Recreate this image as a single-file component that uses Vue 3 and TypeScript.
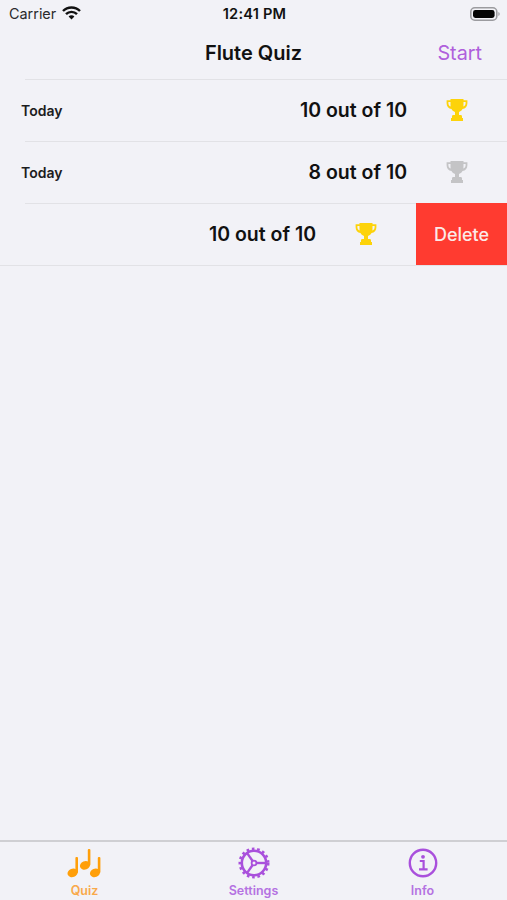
<script setup lang="ts">
interface QuizResult {
  id: number;
  date: string;
  score: number;
  total: number;
  swiped?: boolean;
}

const results: QuizResult[] = [
  { id: 1, date: 'Today', score: 10, total: 10 },
  { id: 2, date: 'Today', score: 8, total: 10 },
  { id: 3, date: '', score: 10, total: 10, swiped: true },
];

const gearSpokes = [0, 125, 235];
</script>

<template>
  <div class="screen">
    <div class="status-bar">
      <div class="status-left">
        <span class="carrier">Carrier</span>
        <svg class="wifi" width="19" height="14" viewBox="0 0 19 14" fill="none" stroke="#111" stroke-width="2.4">
          <path d="M1 5a12 12 0 0 1 17 0" />
          <path d="M4 8.2a7.6 7.6 0 0 1 11 0" />
          <path d="M9.5 13.5l-2.9-3a4 4 0 0 1 5.8 0z" fill="#111" stroke="none" />
        </svg>
      </div>
      <span class="clock">12:41 PM</span>
      <div class="status-right">
        <svg width="30" height="14" viewBox="0 0 30 14">
          <rect x="0.8" y="0.8" width="26" height="12.4" rx="4" fill="none" stroke="#9b9b9f" stroke-width="1.6" />
          <rect x="3" y="3" width="21.6" height="8" rx="2.4" fill="#050505" />
          <path d="M28.4 5v4a2.2 2.2 0 0 0 0-4z" fill="#9b9b9f" />
        </svg>
      </div>
    </div>

    <header class="nav-bar">
      <h1 class="nav-title">Flute Quiz</h1>
      <span class="nav-action">Start</span>
    </header>

    <main class="list">
      <div
        v-for="item in results"
        :key="item.id"
        class="row"
      >
        <div class="row-content">
          <span class="row-date">{{ item.date }}</span>
          <span class="row-score">{{ item.score }} out of {{ item.total }}</span>
          <span class="row-trophy">
            <svg
              width="22"
              height="24"
              viewBox="0 0 22 24"
              :fill="item.score === item.total ? '#fdd30a' : '#c4c4c6'"
            >
              <path d="M4.500 1h13v1.200h3.900v3c0 3.200-2 5.200-4.900 5.900-1 1.700-2.200 2.600-3.500 3v2.900h1.600c.9 0 1.400.6 1.400 1.400V20h1v3H5v-3h1v-1.600c0-.8.5-1.400 1.400-1.400H9v-2.900c-1.300-.4-2.500-1.300-3.500-3C2.600 10.400.6 8.400.6 5.200v-3h3.900zM2.400 4v1.200c0 1.500.8 2.600 2.200 3.200-.1-1.100-.1-2.600-.1-4.400zm17.200 0h-2.100c0 1.800 0 3.300-.1 4.400 1.400-.6 2.200-1.700 2.200-3.200z" fill-rule="evenodd" />
            </svg>
          </span>
        </div>
        <div v-if="item.swiped" class="row-delete">Delete</div>
      </div>
    </main>

    <nav class="tab-bar">
      <div class="tab tab-active">
        <svg width="36" height="32" viewBox="0 -1 36 32" fill="#ff9f0a">
          <ellipse cx="5.600" cy="24.800" rx="5.200" ry="4.200" transform="rotate(-22 5.600 24.800)" />
          <rect x="8.400" y="9" width="2.600" height="16" rx="1" />
          <ellipse cx="18" cy="17.300" rx="5.200" ry="4.200" transform="rotate(-22 18 17.300)" />
          <rect x="20.800" y="1" width="2.600" height="16.500" rx="1" />
          <ellipse cx="28" cy="24.800" rx="5.200" ry="4.200" transform="rotate(-22 28 24.800)" />
          <rect x="30.800" y="9" width="2.600" height="16" rx="1" />
        </svg>
        <span class="tab-label">Quiz</span>
      </div>

      <div class="tab">
        <svg width="32" height="32" viewBox="0 0 32 32" fill="none" stroke="#a950dc">
          <circle cx="16" cy="16" r="12.200" stroke-width="2.600" />
          <circle cx="16" cy="16" r="14.200" stroke-width="2.600" stroke-dasharray="2.600 2.760" />
          <circle cx="16" cy="16" r="2.400" stroke-width="1.800" />
          <line
            v-for="angle in gearSpokes"
            :key="angle"
            x1="18.400"
            y1="16"
            x2="28"
            y2="16"
            stroke-width="2.400"
            :transform="`rotate(${-angle} 16 16)`"
          />
        </svg>
        <span class="tab-label">Settings</span>
      </div>

      <div class="tab">
        <svg width="30" height="32" viewBox="0 -1 30 32" fill="none" stroke="#a950dc">
          <circle cx="15" cy="15" r="13.200" stroke-width="2.400" />
          <circle cx="15" cy="8.800" r="1.900" fill="#a950dc" stroke="none" />
          <path d="M11.800 13h3.800v8M11 21.400h8.600" stroke-width="2.200" />
        </svg>
        <span class="tab-label">Info</span>
      </div>
    </nav>
  </div>
</template>

<style>
html,
body {
  margin: 0;
  background: #f2f2f7;
}
</style>

<style scoped>
.screen {
  display: flex;
  flex-direction: column;
  width: 507px;
  height: 900px;
  overflow: hidden;
  background: #f2f2f7;
  color: #111;
  font-family: Inter, "Liberation Sans", sans-serif;
}

.status-bar {
  display: grid;
  grid-template-columns: 1fr auto 1fr;
  align-items: center;
  height: 27px;
  padding: 0 7px 0 9px;
  flex-shrink: 0;
}

.status-left {
  display: flex;
  align-items: center;
  gap: 6px;
}

.carrier {
  font-size: 14.4px;
  color: #2a2a2c;
}

.wifi {
  margin-top: -2px;
}

.clock {
  font-size: 14.6px;
  font-weight: 600;
  letter-spacing: 0.2px;
}

.status-right {
  display: flex;
  justify-content: flex-end;
}

.nav-bar {
  position: relative;
  display: flex;
  align-items: center;
  justify-content: center;
  height: 52px;
  flex-shrink: 0;
}

.nav-title {
  margin: 0;
  font-size: 20px;
  font-weight: 600;
}

.nav-action {
  position: absolute;
  right: 25px;
  font-size: 19.800px;
  color: #af5fdc;
}

.list {
  flex: 1;
}

.row {
  display: flex;
  height: 62px;
  box-sizing: border-box;
  position: relative;
}

.row::before {
  content: "";
  position: absolute;
  top: 0;
  left: 25px;
  right: 0;
  height: 1px;
  background: #e2e2e6;
}

.row:last-child::after {
  content: "";
  position: absolute;
  bottom: -1px;
  left: 0;
  right: 0;
  height: 1px;
  background: #e2e2e6;
}

.row-content {
  flex: 1;
  display: flex;
  align-items: center;
  padding-left: 21px;
  min-width: 0;
}

.row-date {
  font-size: 14px;
  font-weight: 600;
  color: #1c1c1e;
}

.row-score {
  margin-left: auto;
  font-size: 19.500px;
  font-weight: 600;
  color: #111;
}

.row-trophy {
  display: flex;
  justify-content: center;
  width: 100px;
  flex-shrink: 0;
}

.row-delete {
  position: relative;
  z-index: 1;
  display: flex;
  align-items: center;
  justify-content: center;
  width: 91px;
  flex-shrink: 0;
  background: #ff3b30;
  color: #fbe9e7;
  font-size: 18px;
  font-weight: 500;
}

.tab-bar {
  display: grid;
  grid-template-columns: repeat(3, 1fr);
  height: 60px;
  box-sizing: border-box;
  border-top: 2px solid #cfcfd3;
  flex-shrink: 0;
}

.tab {
  display: flex;
  flex-direction: column;
  align-items: center;
  justify-content: flex-end;
  gap: 4px;
  padding-bottom: 2px;
  color: #b572e2;
}

.tab-active {
  color: #f9a94a;
}

.tab-label {
  font-size: 12.500px;
  font-weight: 600;
  line-height: 15px;
}
</style>
